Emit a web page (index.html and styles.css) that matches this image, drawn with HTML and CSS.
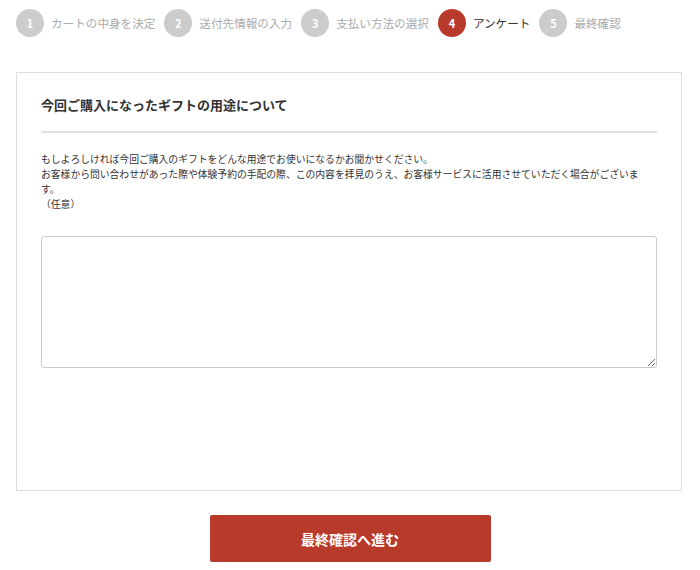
FILE: index.html
```html
<!DOCTYPE html>
<html lang="ja">
<head>
  <meta charset="UTF-8" />
  <meta name="viewport" content="width=device-width, initial-scale=1.0"/>
  <title>アンケート</title>
  <link rel="stylesheet" href="styles.css">
</head>
<body>
  <ol class="steps">
    <li class="step"><span class="num">1</span>カートの中身を決定</li>
    <li class="step"><span class="num">2</span>送付先情報の入力</li>
    <li class="step"><span class="num">3</span>支払い方法の選択</li>
    <li class="step active"><span class="num">4</span>アンケート</li>
    <li class="step"><span class="num">5</span>最終確認</li>
  </ol>

  <div class="box">
    <h2>今回ご購入になったギフトの用途について</h2>
    <p class="note">もしよろしければ今回ご購入のギフトをどんな用途でお使いになるかお聞かせください。<br>お客様から問い合わせがあった際や体験予約の手配の際、この内容を拝見のうえ、お客様サービスに活用させていただく場合がございます。<br>（任意）</p>
    <textarea class="answer" name="usage"></textarea>
  </div>

  <div class="actions">
    <button type="button" class="next">最終確認へ進む</button>
  </div>
</body>
</html>
```

FILE: styles.css
```css
body {
  font-family: "Noto Sans CJK JP", "Noto Sans", sans-serif;
  color: #333;
  background: #fff;
  margin: 0;
}
.steps {
  display: flex;
  align-items: center;
  list-style: none;
  margin: 0;
  padding: 9px 0 0 16px;
}
.step {
  display: flex;
  align-items: center;
  gap: 7px;
  margin-right: 9px;
  font-size: 11.6px;
  color: #aaa;
  white-space: nowrap;
}
.step .num {
  width: 28px;
  height: 28px;
  border-radius: 50%;
  background: #ccc;
  color: #fff;
  font-size: 11px;
  font-weight: bold;
  display: flex;
  align-items: center;
  justify-content: center;
}
.step.active {
  color: #333;
}
.step.active .num {
  background: #b83a2b;
}
.box {
  box-sizing: border-box;
  margin: 35px 18px 0 16px;
  height: 419px;
  border: 1px solid #ddd;
  padding: 22px 24px 0;
}
h2 {
  font-size: 13px;
  font-weight: bold;
  line-height: 20px;
  margin: 0;
  padding-bottom: 16px;
  border-bottom: 2px solid #e2e2e2;
}
.note {
  font-size: 9.8px;
  line-height: 15px;
  margin: 19px 0 0;
}
.answer {
  display: block;
  box-sizing: border-box;
  width: 100%;
  height: 132px;
  margin-top: 24px;
  border: 1px solid #ccc;
  border-radius: 3px;
}
.actions {
  display: flex;
  justify-content: center;
  margin-top: 24px;
}
.next {
  width: 281px;
  height: 47px;
  border: none;
  border-radius: 2px;
  background: #b83a2b;
  color: #fff;
  font-family: inherit;
  font-size: 14px;
  font-weight: bold;
  cursor: pointer;
}
```
